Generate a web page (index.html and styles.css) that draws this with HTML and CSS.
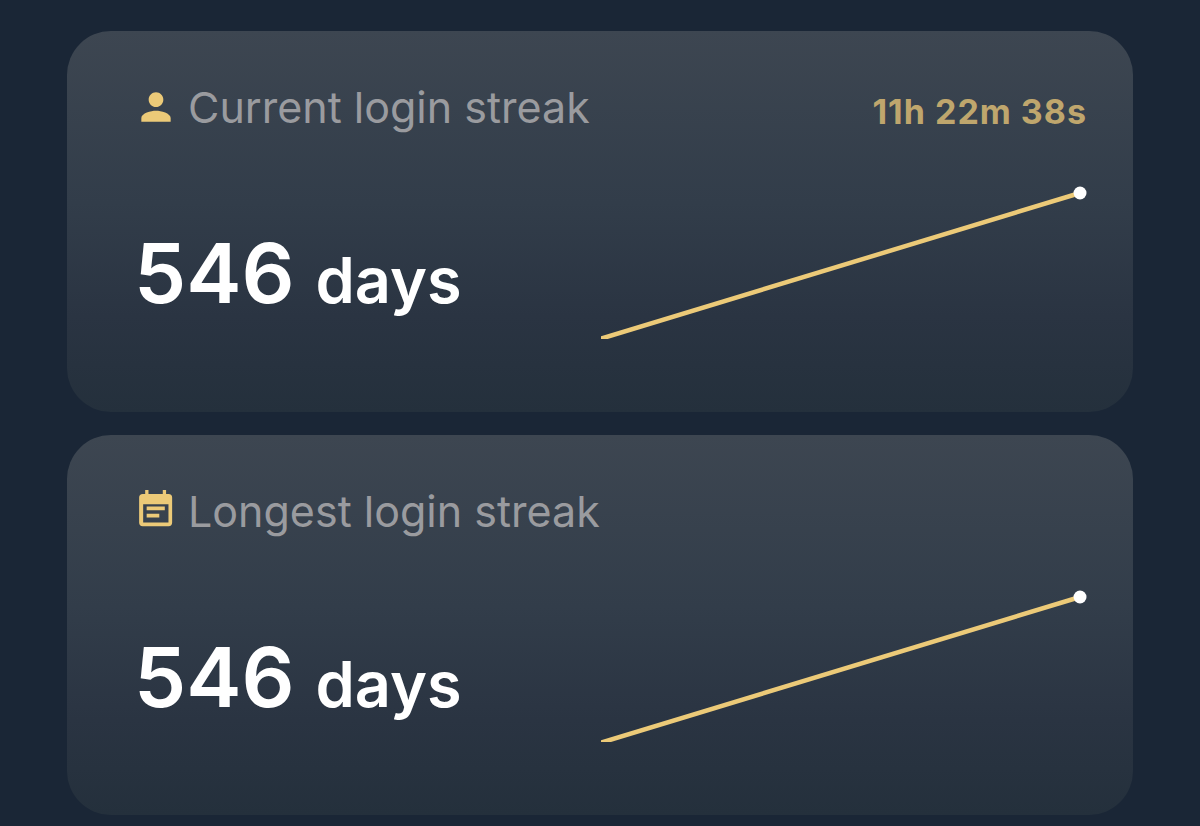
FILE: index.html
```html
<!DOCTYPE html>
<html lang="en">
<head>
    <meta charset="utf-8" />
    <title>Login streaks</title>
    <link rel="stylesheet" href="styles.css">
</head>
<body>
  <main class="streaks">
      <section class="card">
          <header class="card-header">
              <svg class="icon" viewBox="0 0 24 24" aria-hidden="true">
                  <path d="M12 12c2.21 0 4-1.79 4-4s-1.79-4-4-4-4 1.79-4 4 1.79 4 4 4zm0 2c-2.67 0-8 1.34-8 4v2h16v-2c0-2.66-5.33-4-8-4z"/>
              </svg>
              <h2 class="card-title">Current login streak</h2>
              <time class="countdown">11h 22m 38s</time>
          </header>
          <div class="card-body">
              <p class="total">546 <span class="unit">days</span></p>
              <svg class="chart" viewBox="0 0 487 153" aria-hidden="true">
                  <line class="chart-line" x1="0" y1="153" x2="480" y2="7"/>
                  <circle class="chart-dot" cx="480" cy="7" r="6.5"/>
              </svg>
          </div>
      </section>

      <section class="card">
          <header class="card-header">
              <svg class="icon" viewBox="0 0 24 24" aria-hidden="true">
                  <path fill-rule="evenodd" d="M4.8 2.7h1.3V.6h1.800v2.100h7.800V.6h1.800v2.100h1.300a2 2 0 0 1 2 2v13.600a2 2 0 0 1-2 2h-14a2 2 0 0 1-2-2V4.700a2 2 0 0 1 2-2zM5 8.300v10h13.800v-10zM6.900 9.500h9.900v2.100H6.900zM6.900 13.500h6.900v2.100H6.900z"/>
              </svg>
              <h2 class="card-title">Longest login streak</h2>
          </header>
          <div class="card-body">
              <p class="total">546 <span class="unit">days</span></p>
              <svg class="chart" viewBox="0 0 487 153" aria-hidden="true">
                  <line class="chart-line" x1="0" y1="153" x2="480" y2="7"/>
                  <circle class="chart-dot" cx="480" cy="7" r="6.5"/>
              </svg>
          </div>
      </section>
  </main>
</body>
</html>
```
FILE: styles.css
```css
body{
    margin: 0;
    background: #1a2636;
    font-family: Inter, "Liberation Sans", sans-serif;
    color: #fff;
}

.streaks{
    display: flex;
    flex-direction: column;
    gap: 23px;
    padding: 31px 67px 10px;
}

.card{
    padding: 49px 46px 73px 67px;
    border-radius: 44px;
    background: linear-gradient(#3d4651, #323d4a 45%, #2a3442 75%, #24303c);
}

.card-header{
    display: flex;
    align-items: center;
    gap: 10px;
    height: 54px;
}

.icon{
    flex: none;
    width: 44px;
    height: 44px;
    fill: #ecca78;
}

.card-title{
    margin: 0;
    font-size: 43px;
    font-weight: 400;
    line-height: 54px;
    color: #9a9b9f;
}

.countdown{
    margin-left: auto;
    padding-top: 8px;
    font-size: 34px;
    font-weight: 700;
    letter-spacing: 1px;
    color: #bfa66d;
}

.card-body{
    display: flex;
    align-items: center;
    justify-content: space-between;
    margin-top: 52px;
}

.total{
    margin: 0;
    padding-top: 28px;
    font-size: 83px;
    font-weight: 600;
    line-height: 100px;
    white-space: nowrap;
}

.unit{
    font-size: 63px;
}

.chart{
    width: 51%;
}

.chart-line{
    stroke: #ecca78;
    stroke-width: 4.5;
}

.chart-dot{
    fill: #fff;
}
```
